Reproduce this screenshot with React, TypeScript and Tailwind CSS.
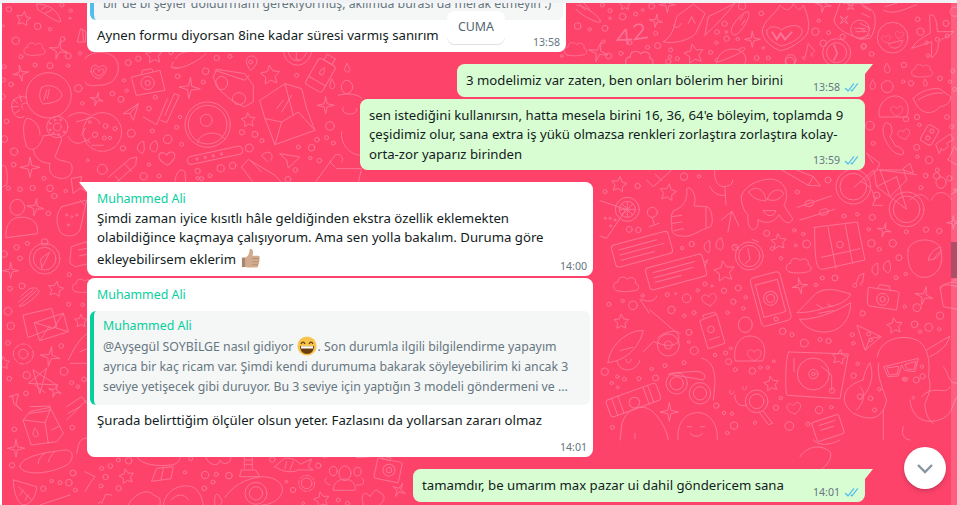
import type { ReactNode } from 'react';

const FONT = 'font-["Noto_Sans",sans-serif]';

// small doodle helpers, coords are in 3x zoom units
function Dots({ d }: { d: number[][] }) {
  return (
    <>
      {d.map(([x, y, r], i) => (
        <circle key={i} cx={x} cy={y} r={r} />
      ))}
    </>
  );
}

function Star({ x, y, r, a = 0 }: { x: number; y: number; r: number; a?: number }) {
  const pts: string[] = [];
  for (let i = 0; i < 10; i++) {
    const rad = i % 2 ? r * 0.5 : r;
    const t = ((i * 36 - 90 + a) * Math.PI) / 180;
    pts.push(`${(x + rad * Math.cos(t)).toFixed(1)},${(y + rad * Math.sin(t)).toFixed(1)}`);
  }
  return <polygon points={pts.join(' ')} strokeLinejoin="round" />;
}

function Spark({ x, y, r, a = 0 }: { x: number; y: number; r: number; a?: number }) {
  const pts: string[] = [];
  for (let i = 0; i < 8; i++) {
    const rad = i % 2 ? r * 0.25 : r;
    const t = ((i * 45 - 90 + a) * Math.PI) / 180;
    pts.push(`${(x + rad * Math.cos(t)).toFixed(1)},${(y + rad * Math.sin(t)).toFixed(1)}`);
  }
  return <polygon points={pts.join(' ')} strokeLinejoin="round" />;
}

function Heart({ x, y, s = 1, a = 0 }: { x: number; y: number; s?: number; a?: number }) {
  return (
    <path
      transform={`translate(${x} ${y}) rotate(${a}) scale(${s})`}
      d="M0 22 C-16 12 -26 4 -24 -8 C-22 -20 -6 -20 0 -8 C6 -20 22 -20 24 -8 C26 4 16 12 0 22Z"
    />
  );
}

function Cloud({ x, y, s = 1, a = 0 }: { x: number; y: number; s?: number; a?: number }) {
  return (
    <path
      transform={`translate(${x} ${y}) rotate(${a}) scale(${s})`}
      d="M-30 22 C-44 18 -42 -4 -26 -4 C-28 -20 -6 -24 2 -12 C12 -24 32 -14 26 0 C42 4 36 24 22 22 C6 26 -14 26 -30 22Z"
    />
  );
}

function Zoomed({ x, y, children }: { x: number; y: number; children: ReactNode }) {
  return <g transform={`translate(${x} ${y}) scale(0.3333)`}>{children}</g>;
}

function Doodles() {
  return (
    <svg
      className="absolute inset-0 h-full w-full"
      viewBox="0 0 955 502"
      fill="none"
      stroke="#fa7396"
      strokeWidth="1"
      strokeLinecap="round"
    >
      <g transform="translate(-2 -3)">
        {/* right middle */}
        <Zoomed x={600} y={170}>
          <g strokeWidth="3">
            <Dots d={[[252,20,11],[297,19,5],[113,48,8],[15,65,6],[684,30,9],[592,66,6],[88,178,9],[115,180,8],[500,190,9],[583,181,5],[610,192,5],[587,226,4],[620,222,12],[275,222,8],[246,234,5],[517,236,6],[543,265,5],[732,138,6],[772,133,5],[817,142,9],[806,178,5],[919,185,6],[978,179,8],[1018,183,8],[814,220,11],[878,220,11],[838,238,6],[897,263,9],[315,342,6],[336,348,3],[293,361,5],[372,362,8],[415,354,9],[202,374,6],[227,371,3],[260,385,13],[400,395,8],[437,382,5],[430,415,5],[99,406,13],[27,403,6],[68,393,5],[128,377,5],[214,420,11],[253,437,5],[282,428,6],[383,428,5],[888,323,6],[917,312,5],[667,324,6],[705,324,9],[648,345,5],[914,410,5],[951,413,12],[1020,437,11],[788,430,8],[806,492,6],[757,494,6],[812,510,5],[760,520,5],[944,463,10],[986,472,12],[1018,478,5],[960,485,5],[548,484,10],[576,494,6],[613,519,12],[660,509,6],[686,513,8],[267,487,9],[266,516,4],[283,542,12],[345,555,5],[377,549,6],[392,535,4],[386,575,9],[252,578,6],[195,587,6],[155,597,5],[14,605,11],[52,620,5],[73,628,6],[117,626,6],[35,639,5],[167,624,9],[53,652,4],[349,707,8],[372,729,5],[396,731,5],[402,767,11],[465,758,5],[382,789,5],[37,772,6],[528,713,8],[542,684,5],[521,574,4],[406,599,6],[457,603,10],[481,593,5],[503,593,5],[657,720,11],[694,712,5],[624,762,6],[773,581,5],[761,617,8],[968,619,8],[949,630,9],[912,627,5],[940,683,4],[568,768,13],[1010,18,10]]} />
            <Star x={57} y={44} r={24} a={10} />
            <Star x={204} y={68} r={26} a={10} />
            <Star x={536} y={216} r={24} a={-5} />
            <Star x={373} y={305} r={32} a={-8} />
            <Star x={64} y={456} r={23} />
            <Star x={884} y={468} r={24} a={-8} />
            <Star x={514} y={642} r={23} a={-8} />
            <Star x={718} y={562} r={23} a={10} />
            <Spark x={852} y={180} r={21} a={15} />
            <Spark x={972} y={378} r={28} a={15} />
            <Spark x={600} y={348} r={24} a={-10} />
            <Spark x={208} y={726} r={28} />
            <Spark x={1060} y={158} r={20} />
            <Cloud x={80} y={340} s={1} />
            <Cloud x={598} y={284} s={1} />
            <Heart x={328} y={388} s={0.9} a={-10} />
            <Heart x={582} y={714} s={0.85} a={-10} />
            {/* cocktail */}
            <path d="M0 92 L78 118 L20 205 L0 198" />
            <circle cx="82" cy="118" r="36" />
            <circle cx="82" cy="118" r="24" />
            <path d="M82 96 V140 M60 118 H104 M66 102 L98 134 M98 102 L66 134" />
            <Dots d={[[30,145,3],[16,145,3],[45,150,3],[32,168,3]]} />
            {/* wine glass */}
            <circle cx="157" cy="127" r="15" />
            <path d="M157 142 L163 163 M148 170 L177 160" />
            {/* thumb */}
            <path d="M222 122 C250 112 264 90 260 56 C276 44 292 84 282 108 L320 110 C336 112 342 160 332 170 C300 178 270 206 244 198 C222 198 212 186 216 168 C212 150 212 130 222 122Z M216 140 L245 136 M216 160 L245 156 M222 182 L250 176 M318 112 L318 170" />
            <path d="M364 150 L396 124 L417 168 M395 124 L384 186" />
            {/* girl hiding face */}
            <path d="M424 80 C430 48 480 24 520 28 C560 36 568 76 552 106 L578 146 C572 168 550 158 538 134 C520 162 492 162 474 148 C478 192 438 190 444 134 C430 122 424 100 424 80Z" />
            <path d="M446 66 C470 40 495 62 498 92 C478 92 458 86 446 66Z M502 88 C510 62 535 50 552 70 C540 90 520 96 502 88Z M490 122 H528 C522 142 498 142 490 122Z" />
            {/* sliders */}
            <path d="M592 112 L694 78 M600 150 L704 118" />
            <ellipse cx="628" cy="100" rx="14" ry="9" transform="rotate(-18 628 100)" />
            <ellipse cx="672" cy="126" rx="14" ry="9" transform="rotate(-18 672 126)" />
            {/* mic */}
            <path d="M344 0 C342 30 352 48 370 50 C388 48 398 44 398 30 M375 52 L378 104 M330 50 C340 72 360 78 376 76" />
            {/* pencil top */}
            <path d="M545 0 L625 46 L662 48 L640 20 L590 0 M625 46 L640 20" />
            <path d="M140 30 L160 50 L215 0 M165 12 L185 32" />
            {/* bike */}
            <circle cx="760" cy="50" r="52" />
            <circle cx="760" cy="50" r="40" />
            <circle cx="920" cy="118" r="52" />
            <circle cx="920" cy="118" r="40" />
            <path d="M762 52 L822 0 L830 50 L920 118 L890 20 M830 50 L890 20 M830 78 L818 106 H848 M840 0 L950 14" />
            <circle cx="830" cy="76" r="10" />
            {/* chat bubbles */}
            <g transform="rotate(-15 125 238)">
              <rect x="38" y="204" width="176" height="68" rx="10" />
              <path d="M58 222 H176 M58 238 H194 M58 254 H160" />
            </g>
            <g transform="rotate(-15 228 305)">
              <rect x="140" y="272" width="176" height="68" rx="10" />
              <path d="M160 290 H290 M160 306 H280 M160 320 H240 M316 300 L328 296 L316 312" />
            </g>
            <path d="M328 212 C310 216 306 240 324 246 C328 254 330 240 330 232 Z M362 204 C346 208 342 234 358 238 C364 246 370 230 370 222Z" />
            <path d="M832 280 C814 284 810 308 826 314 C832 320 834 306 834 300 Z M866 272 C848 276 844 300 860 306 C868 314 872 298 872 290Z" />
            {/* stopwatch */}
            <circle cx="448" cy="258" r="42" />
            <circle cx="448" cy="258" r="32" />
            <path d="M444 236 L450 268 L436 280 M456 208 L476 216 M402 226 L416 240" />
            <circle cx="405" cy="232" r="9" />
            {/* map */}
            <path d="M644 172 L772 156 L795 270 L668 298 C650 298 644 280 644 172Z M684 172 L708 296 M736 165 L758 280 M665 262 L780 236" />
            <circle cx="720" cy="224" r="10" />
            {/* rose */}
            <path d="M924 240 C930 210 990 195 1020 230 C1030 260 1030 310 980 322 C945 325 920 300 924 240Z M985 270 C990 240 1020 230 1022 232 C1024 260 1005 270 985 270Z M1000 268 L1016 248" />
            <path d="M1060 330 H1071 M1020 352 C1030 340 1070 330 1071 340 M1020 352 L1030 410 L1071 418" />
            {/* music */}
            <path d="M768 340 L778 316 L792 310 L788 336 M768 340 C756 340 756 352 764 352 C772 352 772 346 768 340 M788 336 C780 336 778 346 786 346" />
            {/* camera */}
            <path d="M806 352 L892 364 C898 366 898 370 896 378 L890 420 L808 408 C802 406 802 400 802 396Z M834 354 L838 344 L868 348 L870 360" />
            <circle cx="848" cy="388" r="18" />
            <circle cx="848" cy="388" r="8" />
            {/* phone */}
            <g transform="rotate(-15 512 386)">
              <rect x="466" y="312" width="92" height="150" rx="12" />
              <rect x="478" y="335" width="68" height="100" />
              <circle cx="512" cy="385" r="21" />
              <circle cx="512" cy="385" r="12" />
              <circle cx="512" cy="449" r="6" />
            </g>
            {/* lips */}
            <path d="M592 428 L648 370 C680 350 710 360 752 372 C746 390 720 405 680 412 C640 426 610 428 592 428Z M600 448 C640 450 700 430 752 398 C752 450 720 488 670 486 C640 486 610 470 600 448Z M650 404 L668 414 M682 402 L696 410 M656 430 L700 422" />
            {/* user with heart */}
            <ellipse cx="436" cy="464" rx="21" ry="23" />
            <path d="M406 572 C396 530 420 498 450 498 C490 498 504 540 488 572Z" />
            <Heart x={463} y={554} s={0.85} />
            {/* sticker */}
            <path d="M300 452 L350 432 L375 520 L325 536Z M312 444 L308 436 L344 426 L348 434" />
            <circle cx="333" cy="478" r="10" />
            <path d="M328 510 L358 500" />
            {/* scooter */}
            <path d="M24 578 C30 520 90 478 130 482 C120 520 90 570 24 578Z M125 388 C145 398 165 395 170 378 M150 420 L220 480 C240 490 240 510 230 520 C205 535 180 520 160 515 L130 545 M60 542 L98 532" />
            <path d="M120 388 L148 430 M172 505 C195 480 235 480 240 490" />
            <circle cx="205" cy="525" r="33" />
            <path d="M52 575 C58 610 110 608 120 570" />
            <path d="M78 568 C78 582 92 582 94 568" />
            <circle cx="205" cy="525" r="12" />
            {/* turntable */}
            <path d="M566 546 L745 552 L720 686 L562 676 C554 676 556 560 566 546Z" />
            <circle cx="640" cy="612" r="48" />
            <circle cx="640" cy="612" r="14" />
            <circle cx="640" cy="612" r="5" />
            <path d="M665 590 L695 615 L695 660 M582 565 V605" />
            <circle cx="696" cy="662" r="8" />
            {/* glasses */}
            <circle cx="230" cy="640" r="32" />
            <circle cx="300" cy="670" r="32" />
            <circle cx="230" cy="640" r="20" />
            <circle cx="300" cy="670" r="20" />
            <path d="M205 612 L310 630 C325 610 300 604 285 604 L210 610 M305 565 C330 570 345 590 345 640 L340 690" />
            {/* paw + magnifier */}
            <circle cx="470" cy="694" r="34" />
            <circle cx="470" cy="694" r="22" />
            <path d="M490 724 L518 760 L505 764 L480 730" />
            <path d="M405 675 C402 695 420 715 440 705 M430 650 C420 660 440 665 440 650 M392 660 C380 670 400 680 402 665" />
            {/* megaphone */}
            <g transform="rotate(-20 95 690)">
              <rect x="20" y="665" width="160" height="54" rx="10" />
              <path d="M40 665 V719 M60 665 V719 M140 665 V719 M155 665 V719" />
              <circle cx="100" cy="700" r="16" />
            </g>
            <path d="M64 770 C70 730 100 710 130 712 C160 714 190 760 200 790 M65 770 L60 810 M200 790 L205 810 M105 790 V805" />
            {/* smile head */}
            <path d="M234 810 C230 760 255 730 290 728 C330 726 355 765 352 810" />
            <path d="M262 770 L274 770 M302 770 L314 770 M270 790 C280 802 300 802 308 790" />
            {/* card */}
            <g transform="rotate(-18 680 770)">
              <rect x="640" y="745" width="85" height="60" rx="6" />
              <path d="M660 760 H710 M660 775 H700" />
            </g>
            {/* octopus + helmet */}
            <path d="M832 560 C840 510 900 490 950 510 C990 530 990 590 985 620 C995 640 990 670 975 700 C975 730 985 750 1000 760 M836 580 C830 620 850 660 860 690 C850 740 820 760 760 730 C720 700 720 650 790 630 C790 620 800 590 810 578" />
            <path d="M852 590 L955 565 L945 605 L915 602 L905 585 L895 618 L865 620Z" />
            <path d="M860 595 L868 615 L892 612 L896 590Z M915 585 L922 598 L942 598 L948 575Z" />
            <path d="M980 540 L1050 498 C1040 530 1020 545 990 560 M965 680 C1000 640 1040 680 1050 650 M1030 590 C1050 610 1040 640 1071 640" />
            <path d="M770 720 C790 700 800 670 780 650 M810 580 C825 620 810 660 780 690" />
            <Dots d={[[780,680,8],[812,685,7],[824,720,6],[917,628,6],[966,590,5],[838,658,5]]} />
            <path d="M910 770 C900 800 920 810 930 810 M850 720 V810 M930 690 C935 740 970 770 1030 745 C1060 730 1060 690 1071 680" />
            {/* triangle plane */}
            <path d="M772 466 L843 500 L796 540Z M796 540 L810 505 L843 500" />
            {/* right edge */}
            <path d="M1071 350 C1040 340 1020 345 1024 355" />
          </g>
        </Zoomed>

        {/* left lower */}
        <Zoomed x={0} y={200}>
          <g strokeWidth="3">
            <ellipse cx="52" cy="22" rx="22" ry="24" />
            <path d="M18 112 C14 70 40 50 60 52 C100 48 118 75 112 100Z" />
            <Spark x={106} y={22} r={26} a={10} />
            <Spark x={32} y={212} r={24} />
            <Star x={167} y={268} r={24} a={10} />
            <Star x={243} y={364} r={20} />
            <Spark x={150} y={470} r={30} a={10} />
            <Spark x={165} y={573} r={20} a={20} />
            <Spark x={48} y={745} r={26} />
            <Dots d={[[145,40,7],[50,142,8],[82,130,6],[12,162,10],[60,175,7],[208,224,6],[30,266,7],[66,258,9],[24,334,12],[32,378,11],[206,313,6],[248,314,5],[24,429,7],[184,438,7],[80,526,11],[192,514,12],[28,536,7],[215,548,6],[234,560,5],[252,538,7],[78,580,7],[217,683,7],[43,688,7],[36,796,8],[219,819,9],[130,866,8],[155,843,5],[180,848,6],[207,848,10],[226,870,6]]} />
            {/* drink */}
            <path d="M185 20 L260 0 L240 90 C230 110 195 115 180 95 C165 60 170 40 185 20Z" />
            <Dots d={[[200,45,3],[215,50,3],[230,45,3],[205,75,3]]} />
            <path d="M240 0 L252 14" />
            {/* compass */}
            <circle cx="134" cy="176" r="46" />
            <circle cx="134" cy="176" r="34" />
            <circle cx="134" cy="126" r="10" />
            <path d="M148 158 L125 205 L122 178Z" />
            {/* chat */}
            <path d="M215 140 L260 125 L270 190 L225 200 L210 190Z M235 150 L262 145 M238 168 L262 162" />
            <Cloud x={252} y={255} s={0.9} />
            {/* paperclip */}
            <path d="M57 318 L110 272 C120 262 90 260 82 272 L62 290" />
            <path d="M56 306 L100 270 M60 320 C74 318 118 285 118 272" />
            {/* envelopes */}
            <path d="M70 345 L155 325 L170 380 L85 412Z" />
            <path d="M104 368 L190 340 L205 395 L120 422Z M104 368 L160 385 L190 340 M120 422 L148 378 M205 395 L165 383" />
            {/* gear */}
            <circle cx="70" cy="462" r="30" strokeDasharray="16 6" />
            <circle cx="70" cy="462" r="14" />
            {/* bluetooth ish */}
            <path d="M100 510 L170 555 L85 550 L140 505 L120 580Z M105 555 L135 578" />
            <path d="M28 590 L55 582 L48 612 L66 632 L42 612 L38 590Z" />
            {/* milk */}
            <path d="M70 660 L90 635 L150 622 L190 700 L170 725 L95 735Z M90 620 L150 618 L150 632 L90 640 M150 632 L135 668 L145 730 M70 660 L135 668 M155 690 L178 678" />
            <path d="M105 685 C95 700 98 710 107 710 C116 710 118 700 105 685Z" />
            {/* bread */}
            <path d="M60 800 C60 770 140 755 200 750 C225 752 222 790 190 800 C150 820 70 830 60 800Z M115 792 C115 775 125 768 135 760 M145 785 C150 770 155 765 165 755" />
            {/* leaf */}
            <path d="M40 840 L110 860 C110 890 90 915 70 915 C50 910 40 870 40 840Z M55 860 L95 900 M70 870 L60 885 M85 885 L75 900" />
            <path d="M120 915 L210 885" />
            <path d="M200 660 L260 600 M200 620 L245 590 L260 610 M205 640 L240 620" />
            <path d="M205 480 C220 450 240 410 265 400 M210 490 H265 M240 455 L265 445 M230 760 C235 730 240 710 265 715" />
            <Star x={10} y={490} r={20} />
          </g>
        </Zoomed>

        {/* left upper, astronaut */}
        <Zoomed x={0} y={0}>
          <g strokeWidth="3">
            <path d="M110 12 C150 10 180 40 182 65 C175 70 140 45 115 30Z M125 28 L140 18 M135 40 L155 30" />
            <Star x={70} y={57} r={22} a={10} />
            <Spark x={175} y={150} r={28} a={15} />
            <Spark x={62} y={220} r={24} a={-10} />
            <Spark x={90} y={502} r={30} />
            <Cloud x={105} y={145} s={0.85} />
            <Dots d={[[27,28,8],[186,15,6],[212,32,5],[210,55,3],[113,79,10],[150,88,5],[47,122,11],[8,78,4],[13,200,6],[63,170,6],[105,195,6],[150,197,9],[205,168,9],[205,197,5],[188,117,7],[240,160,5],[33,253,7],[11,240,6],[8,290,8],[235,265,11],[247,310,5],[20,364,7],[13,417,10],[42,455,11],[41,494,7],[132,535,6],[60,568,7],[98,564,8],[150,565,10],[25,565,6],[163,588,8],[197,573,5]]} />
            <path d="M232 125 L242 85 L258 95 L256 125Z M248 90 L250 122" />
            {/* helmet */}
            <circle cx="146" cy="286" r="68" />
            <path d="M126 262 C140 250 180 258 186 285 C185 305 150 310 130 312 C116 300 116 275 126 262Z" />
            <path d="M140 270 L132 300 M148 268 L142 296" />
            {/* backpack ring */}
            <path d="M80 292 C50 285 35 300 35 320 C38 345 55 360 72 350 M82 310 C65 305 60 320 70 328" />
            <path d="M40 298 L52 310 M35 320 L55 320 M45 340 L60 330 M58 285 L65 305" />
            {/* body */}
            <path d="M80 355 C65 370 70 410 80 440 C100 460 120 440 130 408 M100 450 C105 480 130 490 150 490 C145 510 150 530 180 535 C210 540 225 510 212 490 C195 480 175 485 165 470 L185 420 C185 405 170 400 150 405 L130 408 M80 355 C100 355 120 375 120 405" />
            <circle cx="172" cy="381" r="32" />
            <circle cx="172" cy="381" r="12" />
            <Dots d={[[150,370,3],[165,360,3],[182,360,3],[150,390,3],[160,400,3],[176,404,3],[192,396,3]]} />
            <path d="M205 350 C225 335 250 335 270 345 M205 410 C215 430 235 435 250 425 C260 425 265 420 270 415 M230 365 L270 355 M245 405 L256 385" />
            <path d="M5 500 C20 480 25 530 20 555 L8 560" />
            <path d="M215 535 L245 530 L240 555 L262 575 L240 565 L220 580 Z" />
          </g>
        </Zoomed>

        {/* top centre */}
        <Zoomed x={560} y={0}>
          <g strokeWidth="3">
            <path d="M50 15 C80 20 120 50 122 66 C110 70 70 50 48 28 M60 12 L75 30 M72 10 L90 30" />
            <Star x={195} y={14} r={18} />
            <Spark x={288} y={63} r={20} a={10} />
            <Spark x={115} y={157} r={30} a={15} />
            <Spark x={322} y={14} r={24} />
            <Spark x={577} y={118} r={24} />
            <Spark x={790} y={14} r={24} a={10} />
            <Star x={402} y={163} r={30} a={-10} />
            <Cloud x={48} y={145} s={0.9} />
            <Cloud x={240} y={175} s={1.1} />
            <Dots d={[[127,15,6],[150,32,6],[275,18,9],[227,42,6],[248,30,4],[188,50,10],[150,55,4],[53,78,10],[89,88,5],[135,85,9],[287,100,6],[263,142,6],[293,137,9],[210,128,6],[130,125,5],[183,160,6],[146,168,9],[5,168,4],[332,150,6],[330,170,5],[352,176,6],[325,185,8],[452,157,6],[494,71,8],[471,96,7],[499,96,4],[500,116,8],[469,128,5],[533,117,5],[546,18,11],[604,40,7],[590,174,7],[625,174,6],[610,144,4],[776,62,5],[766,95,11],[806,98,6],[911,140,8],[692,180,16]]} />
            {/* rocket */}
            <path d="M310 125 C340 110 345 70 350 50 C360 40 385 25 400 12 L435 40 L408 98 C400 115 345 135 310 125Z M340 75 C345 90 360 80 365 70 M385 70 L395 50 L405 70" />
            <path d="M435 105 L445 50 L525 10 C500 40 470 75 435 105Z" />
            <path d="M515 85 C525 60 550 35 565 35 C575 45 545 100 525 105 C515 105 512 95 515 85Z M540 60 L550 45 M545 75 L555 60" />
            {/* heart with flames */}
            <path d="M607 92 C610 60 650 40 660 15 C670 28 690 40 700 10 C710 25 720 40 730 15 C745 45 755 90 735 110 C710 135 680 150 660 152 C630 140 605 115 607 92Z" />
            <path d="M620 92 C630 75 650 78 665 90 C685 75 715 70 725 88 C735 110 690 132 665 138 C640 130 618 110 620 92Z" />
            <path d="M637 97 L650 118 L662 100 L675 118 L695 97" strokeWidth="6" />
            {/* 42 */}
            <path d="M195 90 L172 120 L215 118 M198 88 L202 132" strokeWidth="5" />
            <path d="M222 80 C235 65 255 75 248 90 L225 118 L262 112" strokeWidth="5" />
            {/* note */}
            <path d="M735 172 L745 130 L765 155 M735 172 C725 165 725 180 735 178 M760 160 C750 155 750 170 760 168" />
            {/* clock */}
            <circle cx="830" cy="158" r="42" />
            <circle cx="830" cy="158" r="30" />
            <path d="M822 135 L832 160 L822 180" strokeWidth="5" />
            <circle cx="790" cy="130" r="10" />
            <circle cx="848" cy="110" r="8" />
            {/* calendar */}
            <path d="M850 10 H930 M822 60 L840 10 M822 60 C825 90 880 110 900 115 L930 105" />
            <path d="M885 85 H915 M888 95 H915" />
            <circle cx="900" cy="88" r="28" />
            <Spark x={852} y={60} r={16} a={45} />
            <Spark x={872} y={20} r={14} a={45} />
            <path d="M910 20 L930 32 M905 40 L930 52" />
            {/* saturn */}
            <path d="M470 190 C470 155 510 140 535 150 C560 160 560 180 555 190" />
            <path d="M470 175 C455 185 470 190 490 180 C520 170 560 150 555 145 C550 140 540 145 535 148" />
            <circle cx="690" cy="186" r="14" />
          </g>
        </Zoomed>

        {/* mid, between the top bubble and the messages */}
        <Zoomed x={85} y={52}>
          <g strokeWidth="3">
            <path d="M0 20 C10 0 60 -5 80 10 C100 20 105 50 95 70 C85 95 60 100 35 100 C15 105 0 95 0 90" />
            <path d="M18 58 C18 35 35 35 42 48 C50 35 70 40 62 60 C55 72 45 80 40 80 C30 78 20 70 18 58Z M25 58 C28 45 36 45 42 58 C50 48 60 50 56 60 C50 68 45 72 40 72 C32 68 28 65 25 58Z" />
            <path d="M140 75 L225 55 L240 115 L155 130Z M170 68 L172 55 L200 50 L205 60" />
            <circle cx="188" cy="93" r="20" />
            <circle cx="188" cy="93" r="8" />
            <Star x={207} y={10} r={26} a={-5} />
            <Star x={556} y={70} r={30} a={-5} />
            <Star x={490} y={205} r={22} a={-5} />
            <Spark x={314} y={108} r={32} a={5} />
            <Spark x={35} y={142} r={20} a={15} />
            <Spark x={722} y={160} r={26} />
            <Dots d={[[130,32,9],[160,20,8],[258,2,6],[117,85,5],[125,116,5],[82,125,7],[108,142,9],[211,136,6],[192,170,7],[278,73,7],[362,58,10],[355,90,6],[395,18,8],[435,13,6],[635,70,6],[285,195,5],[202,237,6],[275,226,6],[139,244,12],[248,262,13],[290,277,6],[114,289,8],[471,241,8],[510,247,9],[531,266,6],[696,263,7],[725,257,6],[745,273,6],[640,285,6],[680,287,10],[676,318,5],[703,326,7],[631,354,7],[493,288,12],[192,338,5],[338,357,8],[407,349,11],[443,341,10],[375,371,6],[350,380,6],[338,378,5],[222,372,6],[176,373,11],[735,222,13],[609,382,9],[52,352,15],[8,325,4]]} />
            {/* saturn */}
            <path d="M272 20 C280 0 310 -5 340 0 M258 45 C275 60 340 30 362 5 M265 30 C255 40 262 50 280 48" />
            {/* bottle */}
            <g transform="rotate(30 708 65)">
              <rect x="680" y="25" width="58" height="90" rx="10" />
              <rect x="695" y="5" width="28" height="20" />
              <path d="M680 90 H738" />
              <path d="M708 45 C698 58 702 68 708 68 C716 68 718 58 708 45Z" />
            </g>
            <path d="M786 35 C776 50 778 60 787 60 C796 60 798 50 786 35Z M741 82 C731 97 733 110 742 110 C752 110 752 97 741 82Z" />
            <ellipse cx="786" cy="105" rx="17" ry="20" />
            {/* pin */}
            <path d="M497 55 C480 35 480 15 497 12 C515 10 522 30 510 42Z" />
            <circle cx="497" cy="30" r="6" />
            {/* clock piece */}
            <path d="M596 0 C600 45 665 60 680 0 M610 0 C615 30 650 40 665 0 M634 0 V20 M632 20 L645 25" />
            {/* sunglasses */}
            <path d="M385 75 L395 52 L480 65 L505 100 L505 150 L495 155 L478 165 L440 145 L405 115Z" />
            <ellipse cx="410" cy="93" rx="18" ry="20" />
            <ellipse cx="462" cy="140" rx="20" ry="18" />
            <path d="M390 55 L480 85 L492 70" />
            {/* envelope */}
            <path d="M525 145 L600 95 L650 110 L665 170 L690 235 L570 278 L540 200Z M540 200 L590 210 L640 180 L690 235 M570 278 L590 210 M600 95 L625 190 M575 170 L595 145 M590 180 L620 130" />
            {/* checks */}
            <path d="M175 195 L215 218 L247 140 M228 205 L245 212 L283 130 L268 125 L240 190" />
            <path d="M115 185 L160 155 L145 205 L135 185Z M135 185 L160 155" />
            {/* profile circle */}
            <circle cx="368" cy="218" r="68" />
            <circle cx="368" cy="218" r="58" />
            <circle cx="364" cy="205" r="18" />
            <path d="M338 272 C340 245 395 228 420 262" />
            {/* moon */}
            <circle cx="52" cy="240" r="58" strokeDasharray="18 4" />
            <Dots d={[[30,248,8],[62,222,7],[58,258,6],[75,258,5],[90,230,6],[14,210,4]]} />
            <path d="M5 200 C20 190 40 200 45 215 M20 280 H55 M0 260 L15 272" />
            {/* quote */}
            <path d="M175 268 C155 272 150 295 168 302 C172 310 178 298 178 290Z M212 266 C195 270 188 295 205 298 C212 306 218 290 218 282Z" />
            <Heart x={246} y={318} s={1} a={-5} />
            {/* band */}
            <g transform="rotate(-12 390 310)">
              <rect x="305" y="298" width="170" height="24" rx="12" />
              <Dots d={[[335,310,3],[360,310,3],[385,310,3],[410,310,3]]} />
            </g>
            {/* pen */}
            <path d="M70 376 L135 320 L155 315 L152 340 L90 395 M118 335 L140 358 M90 372 L105 388" />
            <path d="M270 392 C270 360 290 345 300 360 L302 392" />
            {/* cylinder */}
            <path d="M470 345 L490 322 L570 370 L590 392 M470 345 L505 392 M495 325 L530 360" />
            <path d="M530 310 C550 290 570 305 558 325 M530 310 L548 330" />
            <path d="M585 305 L645 315 L610 348 L605 325Z" />
            <path d="M690 392 L750 310 C765 300 780 320 770 330 M735 330 L750 345 M755 350 H830 L820 392" />
            <path d="M760 130 C790 120 830 130 830 140 M770 240 C765 270 790 310 830 310 M775 165 C760 190 820 195 815 170" />
          </g>
        </Zoomed>

        {/* top right corner */}
        <Zoomed x={860} y={0}>
          <g strokeWidth="3">
            <path d="M0 10 L35 30 C50 40 50 90 30 115 L0 118 M0 70 L30 85 M0 85 L20 95" />
            <path d="M70 30 C100 50 150 20 170 14 M75 20 L110 10" />
            <circle cx="98" cy="113" r="46" />
            <Heart x={78} y={116} s={0.55} a={-10} />
            <Heart x={118} y={104} s={0.55} a={10} />
            <path d="M85 132 C95 152 122 148 128 122 Z" />
            <Dots d={[[173,58,7],[181,95,11],[258,70,9],[284,35,14],[12,138,7],[35,162,7],[200,128,5],[232,118,6],[262,108,6],[204,167,5],[132,195,8],[240,235,7],[270,245,5],[278,213,6],[130,245,5],[153,250,8],[82,260,18],[284,268,6],[138,357,8],[171,351,8],[178,375,5],[261,351,7],[275,380,6],[30,377,13],[40,430,6],[170,442,9],[172,470,5],[207,480,11],[232,510,6],[197,527,7],[183,563,6],[268,535,8],[285,570,4]]} />
            <path d="M210 45 C225 40 230 60 232 95 L280 95 C270 110 240 115 235 130 C235 160 220 172 214 172 L215 125 L155 145 C170 120 200 105 210 100Z" />
            <path d="M80 190 C70 205 72 218 82 218 C92 218 94 205 80 190Z M38 240 C28 255 28 268 38 268 C48 268 50 255 38 240Z M195 238 C188 248 190 258 196 258 C204 258 204 248 195 238Z" />
            <Cloud x={188} y={210} s={0.85} />
            <path d="M160 295 C180 270 240 255 250 275 L272 290 C275 310 250 320 240 320 C220 345 180 350 160 295Z M175 300 C195 285 230 275 248 280" />
            <path d="M58 350 C50 315 80 285 110 288 C145 295 150 330 140 350Z" />
            <Heart x={110} y={332} s={0.75} />
            <path d="M78 368 C60 385 70 420 95 450 C110 465 135 470 130 455 C128 445 110 435 108 440 L90 410 C95 400 100 395 92 375Z" />
            <Heart x={132} y={402} s={0.75} a={-15} />
            <g transform="rotate(30 210 405)">
              <rect x="190" y="378" width="38" height="55" rx="8" />
              <circle cx="209" cy="392" r="6" />
              <circle cx="209" cy="416" r="6" />
            </g>
            <path d="M228 432 L270 402 L282 418 L260 430 L265 440 L248 452 L244 445 L238 460Z M265 480 L282 440 L291 450 M262 478 L291 495" />
            <path d="M20 460 L60 490 L50 510 L130 510 L160 520 L150 490 L130 505 M50 510 L20 540 M60 510 L90 590 L140 540 L130 505 M20 460 L40 490" />
            <ellipse cx="243" cy="548" rx="15" ry="17" />
            <path d="M215 600 C225 570 260 570 275 600" />
            <path d="M270 585 C275 580 291 575 291 575 M150 600 C180 570 200 590 205 600" />
            <path d="M0 545 C25 550 40 570 45 600" />
          </g>
        </Zoomed>

        {/* bottom strip */}
        <Zoomed x={85} y={455}>
          <g strokeWidth="3">
            <Star x={125} y={65} r={23} a={-10} />
            <Star x={710} y={135} r={24} a={-10} />
            <Spark x={942} y={105} r={22} a={30} />
            <Dots d={[[100,15,6],[131,17,10],[50,40,6],[76,33,7],[62,66,8],[48,93,6],[101,100,8],[300,52,5],[317,11,6],[360,60,11],[394,58,6],[432,62,10],[384,81,6],[358,100,7],[562,14,8],[604,80,4],[624,105,8],[700,32,8],[655,145,4],[760,135,6],[788,145,6]]} />
            <path d="M0 50 L30 65 L15 85 L0 110" />
            <path d="M155 5 C170 30 215 35 260 30 C285 25 285 10 285 5 M200 78 L215 40 L265 35 L258 70 Z M235 40 L228 75" />
            <path d="M362 5 C370 35 405 35 405 15 C415 35 440 25 438 5" />
            <path d="M478 40 V5 M502 40 V5 M478 15 H502 M478 28 H502" />
            <path d="M420 128 C440 95 480 70 530 65 C580 65 600 95 590 115 C580 140 550 150 530 150" />
            <path d="M470 45 H512 L525 65 H465Z" />
            <circle cx="513" cy="115" r="33" />
            <circle cx="513" cy="115" r="20" />
            <path d="M390 150 C385 125 395 105 405 128 C415 135 410 145 405 150" />
            <path d="M570 35 L595 12 C610 5 640 15 645 28 L680 12 L670 35 L685 45 L640 45 C620 55 590 50 570 35Z M605 20 L600 40 M625 20 L615 45" />
            <circle cx="665" cy="85" r="16" />
            <circle cx="665" cy="85" r="24" strokeDasharray="12 6" />
            <path d="M715 8 L745 2 M815 8 L860 5" />
            <ellipse cx="780" cy="55" rx="18" ry="22" />
            <ellipse cx="745" cy="48" rx="12" ry="14" />
            <ellipse cx="818" cy="50" rx="11" ry="13" />
            <path d="M745 105 C745 85 760 72 780 72 C800 72 815 90 810 105Z M735 90 C720 85 715 75 725 68 M815 90 C840 95 840 75 830 68" />
            <g transform="rotate(12 910 45)">
              <rect x="872" y="15" width="75" height="62" rx="6" />
              <circle cx="912" cy="45" r="18" />
              <circle cx="912" cy="45" r="8" />
              <rect x="885" y="8" width="25" height="8" />
            </g>
            <path d="M835 150 C825 115 840 105 855 125 C865 105 880 100 880 110 C905 120 900 135 885 150" />
            <path d="M130 150 C140 125 180 100 200 115 C215 130 230 120 225 150 M235 150 C240 110 280 85 320 95 C345 105 350 130 355 150 M258 135 C275 115 300 115 310 135" />
            <path d="M50 145 L62 118 L80 120 M48 140 L40 145" />
          </g>
        </Zoomed>

        {/* bottom right */}
        <Zoomed x={800} y={440}>
          <g strokeWidth="3">
            <path d="M0 50 C20 20 60 10 90 35 C100 50 80 80 60 90" />
            <path d="M40 0 C60 20 90 15 120 0" />
          </g>
        </Zoomed>
      </g>
    </svg>
  );
}

function DoubleCheck() {
  return (
    <svg viewBox="0 0 16 15" className="ml-[4px] h-[15px] w-[15px]" fill="#53bdeb">
      <path d="M15.01 3.316l-.478-.372a.365.365 0 0 0-.51.063L8.666 9.879a.32.32 0 0 1-.484.033l-.358-.325a.319.319 0 0 0-.484.032l-.378.483a.418.418 0 0 0 .036.541l1.32 1.266c.143.14.361.125.484-.033l6.272-8.048a.366.366 0 0 0-.064-.512zm-4.1 0l-.478-.372a.365.365 0 0 0-.51.063L4.566 9.879a.32.32 0 0 1-.484.033L1.891 7.769a.366.366 0 0 0-.515.006l-.423.433a.364.364 0 0 0 .006.514l3.258 3.185c.143.14.361.125.484-.033l6.272-8.048a.365.365 0 0 0-.063-.51z" />
    </svg>
  );
}

function Time({ t, sent }: { t: string; sent?: boolean }) {
  return (
    <div className="absolute bottom-[2px] right-[6px] flex items-center text-[10.6px] leading-[15px] text-[#667781]">
      {t}
      {sent && <DoubleCheck />}
    </div>
  );
}

function OutBubble({ t, tail, className, children }: { t: string; tail?: boolean; className: string; children: ReactNode }) {
  return (
    <div className={`relative self-end whitespace-nowrap rounded-[7.5px] bg-[#d9fdd3] text-[#111b21] ${tail ? 'rounded-tr-none' : ''} ${className}`}>
      {tail && (
        <svg viewBox="0 0 8 13" className="absolute -right-[8px] top-0 h-[13px] w-[8px]" fill="#d9fdd3">
          <path d="M0 0 H8 L0 10Z" />
        </svg>
      )}
      {children}
      <Time t={t} sent />
    </div>
  );
}

function Name() {
  return <div className="text-[12.4px] leading-[20px] text-[#06cf9c]">Muhammed Ali</div>;
}

function ThumbsUp() {
  return (
    <svg viewBox="0 0 22 22" className="ml-[4px] inline-block h-[21px] w-[21px] align-[-5px]">
      <path d="M2 10 H6 V20 H2 Z" fill="#a9876d" />
      <path d="M6 10 C9 8 10 5 10 2 C10 0.5 13 0.5 13.5 3 C14 5 13.5 7 13 8 H19 C21 8 21 11 20 11.5 C21 12.5 21 14 19.5 14.5 C20.5 15.5 20 17 19 17.5 C19.5 19 18.5 20.5 17 20.5 H9 C7.5 20.5 6 20 6 19 Z" fill="#d2ab8e" />
      <path d="M13 11 H20 M13 14.5 H19.5 M13 17.5 H19" stroke="#a9876d" strokeWidth="0.8" fill="none" />
    </svg>
  );
}

function Grin() {
  return (
    <svg viewBox="0 0 20 20" className="ml-[1px] inline-block h-[20px] w-[20px] align-[-5px]">
      <circle cx="10" cy="10" r="9.6" fill="#f7c54d" />
      <path d="M3 10 H17 C17 15 14 18 10 18 C6 18 3 15 3 10Z" fill="#6b3e12" />
      <path d="M4 10.2 H16 V12.5 H4Z" fill="#fff" />
      <path d="M4 8 C5 5.5 7 5.5 8 8 M12 8 C13 5.5 15 5.5 16 8" stroke="#6b3e12" strokeWidth="1.2" fill="none" />
    </svg>
  );
}

export default function App() {
  return (
    <div className={`flex h-screen w-screen flex-col overflow-hidden bg-[#f0f2f5] ${FONT}`}>
      <div className="h-[3px] shrink-0 bg-[#f0f2f5]" />
      <div className="flex min-h-0 flex-1">
        <div className="w-[2px] shrink-0 bg-white" />
        <div className="relative min-w-0 flex-1 overflow-hidden bg-[#fe436a]">
          <Doodles />

          {/* messages */}
          <div className="relative flex flex-col whitespace-nowrap pl-[85px] pr-[92px] text-[13.2px] leading-[19.3px]">
            <div className="relative -mt-[32px] h-[81px] w-[479px] rounded-[7.5px] bg-white px-[3px] pt-[3px] text-[#111b21]">
              <div className="flex h-[46px] items-end overflow-hidden rounded-[6px] border-l-4 border-[#53bdeb] bg-[#f5f6f6] pb-[7px] pl-[9px] text-[12.3px] text-[#667781]">
                bir de bi şeyler doldurmam gerekiyormuş, aklımda burası da merak etmeyin :)
              </div>
              <div className="pl-[7px] pt-[6px]">Aynen formu diyorsan 8ine kadar süresi varmış sanırım</div>
              <Time t="13:58" />
            </div>

            <OutBubble t="13:58" tail className="mt-[12px] h-[33px] w-[408px] pl-[9px] pt-[7px]">
              3 modelimiz var zaten, ben onları bölerim her birini
            </OutBubble>

            <OutBubble t="13:59" className="mt-[2px] h-[71px] w-[505px] pl-[9px] pt-[7px]">
              sen istediğini kullanırsın, hatta mesela birini 16, 36, 64'e böleyim, toplamda 9
              <br />
              çeşidimiz olur, sana extra iş yükü olmazsa renkleri zorlaştıra zorlaştıra kolay-
              <br />
              orta-zor yaparız birinden
            </OutBubble>

            <div className="relative mt-[12px] h-[94px] w-[506px] rounded-[7.5px] rounded-tl-none bg-white pl-[10px] pt-[7px] text-[#111b21]">
              <svg viewBox="0 0 8 13" className="absolute -left-[8px] top-0 h-[13px] w-[8px]" fill="#fff">
                <path d="M8 0 H0 L8 10Z" />
              </svg>
              <Name />
              <div>
                Şimdi zaman iyice kısıtlı hâle geldiğinden ekstra özellik eklemekten
                <br />
                olabildiğince kaçmaya çalışıyorum. Ama sen yolla bakalım. Duruma göre
                <br />
                ekleyebilirsem eklerim
                <ThumbsUp />
              </div>
              <Time t="14:00" />
            </div>

            <div className="relative mt-[2px] h-[179px] w-[506px] rounded-[7.5px] bg-white pt-[7px] text-[#111b21]">
              <div className="pl-[10px]">
                <Name />
              </div>
              <div className="mx-[3px] mt-[6px] h-[94px] rounded-[6px] border-l-4 border-[#06cf9c] bg-[#f5f6f6] pl-[9px] pt-[5px] text-[12.3px] text-[#667781]">
                <Name />
                <div className="leading-[20px]">
                  @Ayşegül SOYBİLGE nasıl gidiyor <Grin />. Son durumla ilgili bilgilendirme yapayım
                  <br />
                  ayrıca bir kaç ricam var. Şimdi kendi durumuma bakarak söyleyebilirim ki ancak 3
                  <br />
                  seviye yetişecek gibi duruyor. Bu 3 seviye için yaptığın 3 modeli göndermeni ve ...
                </div>
              </div>
              <div className="mt-[6px] pl-[10px]">Şurada belirttiğim ölçüler olsun yeter. Fazlasını da yollarsan zararı olmaz</div>
              <Time t="14:01" />
            </div>

            <OutBubble t="14:01" tail className="mt-[12px] h-[33px] w-[452px] pl-[9px] pt-[7px]">
              tamamdır, be umarım max pazar ui dahil göndericem sana
            </OutBubble>
          </div>

          {/* floating date chip */}
          <div className="absolute left-[445px] top-[8px] flex h-[33px] w-[58px] items-center justify-center rounded-[7.5px] bg-white text-[12.4px] text-[#54656f] shadow-[0_1px_0.5px_rgba(11,20,26,0.13)]">
            CUMA
          </div>

          {/* scroll to bottom */}
          <div className="absolute left-[902px] top-[444px] flex h-[42px] w-[42px] items-center justify-center rounded-full bg-white shadow-[0_1px_1px_rgba(11,20,26,0.06),0_2px_5px_rgba(11,20,26,0.2)]">
            <svg viewBox="0 0 16 10" className="mt-[2px] h-[10px] w-[16px]" fill="none" stroke="#8696a0" strokeWidth="2.4">
              <path d="M1 1 L8 8 L15 1" />
            </svg>
          </div>

          {/* scrollbar */}
          <div className="absolute bottom-0 right-0 top-0 w-[6px] bg-white/15">
            <div className="mt-[239px] h-[36px] bg-[#9a4a62]/80" />
          </div>
        </div>
      </div>
    </div>
  );
}
